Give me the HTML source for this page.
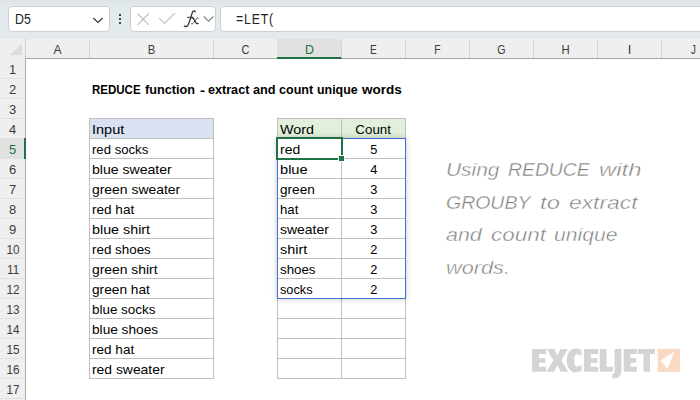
<!DOCTYPE html>
<html>
<head>
<meta charset="utf-8">
<title>REDUCE function - extract and count unique words</title>
<style>
html,body{margin:0;padding:0;}
body{width:700px;height:400px;overflow:hidden;background:#fff;position:relative;font-family:"Liberation Sans",sans-serif;color:#000;}
.a{position:absolute;}
.box{position:absolute;background:#fff;border:1px solid #cdd0d2;border-radius:4px;box-sizing:border-box;}
.ch{position:absolute;top:39px;height:19px;line-height:21.6px;text-align:center;font-size:13px;color:#3b3b3b;}
.cs{position:absolute;top:41px;width:1px;height:17px;background:#d2d2d2;}
.rh{position:absolute;left:0;width:25px;height:19px;line-height:21.6px;text-align:center;font-size:13px;color:#3b3b3b;}
.rs{position:absolute;left:0;width:25px;height:1px;background:#e1e1e1;}
.t{position:absolute;height:19px;line-height:22px;font-size:13.6px;white-space:nowrap;transform-origin:0 50%;transform:scaleX(1.035);}
.n{position:absolute;height:19px;line-height:22px;font-size:13.6px;white-space:nowrap;text-align:center;}
.n span{display:inline-block;transform:scaleX(1.035);}
.hl{position:absolute;height:1px;background:#bfbfbf;}
.vl{position:absolute;width:1px;background:#bfbfbf;}
.w{position:absolute;font-size:18.5px;line-height:30px;height:30px;font-style:italic;color:#7d7d7d;-webkit-text-stroke:0.4px #fff;white-space:nowrap;transform-origin:0 50%;}
</style>
</head>
<body>

<div class="a" style="left:0;top:0;width:700px;height:39px;background:#e3eaed;"></div>
<div class="a" style="left:0;top:0;width:700px;height:5px;background:linear-gradient(#dde3e6,#e3eaed);"></div>
<div class="box" style="left:8px;top:6px;width:102px;height:26px;"></div>
<div class="a" style="left:15px;top:9px;font-size:15px;line-height:20px;color:#222;transform-origin:0 50%;transform:scaleX(0.825);">D5</div>
<svg class="a" style="left:92.2px;top:15.3px;" width="12" height="10" viewBox="0 0 12 10"><path d="M1.3 3 L6 7.4 L10.7 3" fill="none" stroke="#3a3a3a" stroke-width="1.2"/></svg>
<div class="a" style="left:119px;top:14px;width:2px;height:2px;background:#444;"></div>
<div class="a" style="left:119px;top:18px;width:2px;height:2px;background:#444;"></div>
<div class="a" style="left:119px;top:22px;width:2px;height:2px;background:#444;"></div>
<div class="box" style="left:130px;top:6px;width:86px;height:26px;"></div>
<svg class="a" style="left:136px;top:12px;" width="15" height="15" viewBox="0 0 15 15"><path d="M1.5 1.5 L12.8 12.8 M12.8 1.5 L1.5 12.8" fill="none" stroke="#bcbcbc" stroke-width="1.1"/></svg>
<svg class="a" style="left:158px;top:12px;" width="18" height="15" viewBox="0 0 18 15"><path d="M1.2 6.2 L6.4 11.5 L16.9 1.1" fill="none" stroke="#bcbcbc" stroke-width="1.1"/></svg>
<svg class="a" style="left:180px;top:6px;" width="22" height="26" viewBox="180 6 22 26" fill="none" stroke="#2e2e2e" stroke-linecap="round" stroke-linejoin="round"><path stroke-width="1.3" d="M195.3 11.9 C194.9 10.7 193 10.4 192.4 12.4 L188.4 24.6 C187.8 26.4 186 26.9 184.3 26.2"/><path stroke-width="0.95" d="M187.4 17.3 H193.2"/><path stroke-width="1.3" d="M192 18.3 C192.9 17.8 193.5 18.3 194.1 19.5 L195.9 22.8 C196.5 23.9 197.1 24 198 23.4"/><path stroke-width="0.9" d="M198.4 18.1 C197.7 17.6 197.1 18 196.4 18.9 L193.4 22.8 C192.7 23.7 192.2 24.1 191.6 23.8"/></svg>
<svg class="a" style="left:203px;top:15.3px;" width="12" height="8" viewBox="0 0 12 8"><path d="M0.8 1.5 L5.6 6.2 L10.4 1.5" fill="none" stroke="#808080" stroke-width="1.1"/></svg>
<div class="box" style="left:220px;top:6px;width:490px;height:26px;"></div>
<div class="a" style="left:236px;top:9px;font-size:15px;line-height:20px;color:#222;letter-spacing:1px;transform-origin:0 50%;transform:scaleX(0.82);">=LET(</div>
<div class="a" style="left:0;top:39px;width:700px;height:19px;background:#efefef;"></div>
<div class="a" style="left:0;top:58px;width:25px;height:342px;background:#efefef;"></div>
<div class="a" style="left:277px;top:39px;width:65px;height:18px;background:#e1e1e1;"></div>
<div class="a" style="left:0;top:138px;width:24px;height:21px;background:#e1e1e1;"></div>
<div class="a" style="left:25px;top:39px;width:1px;height:19px;background:#cfcfcf;"></div>
<div class="a" style="left:25px;top:58px;width:675px;height:1px;background:#a6a6a6;"></div>
<div class="a" style="left:25px;top:58px;width:1px;height:342px;background:#acacac;"></div>
<div class="a" style="left:277px;top:57px;width:65px;height:2px;background:#217346;"></div>
<div class="a" style="left:24px;top:138px;width:2px;height:21px;background:#217346;"></div>
<svg class="a" style="left:9px;top:43px;" width="14" height="13" viewBox="0 0 14 13"><path d="M13 0 L13 12 L1 12 Z" fill="#dcdcdc"/></svg>
<div class="ch" style="left:26px;width:63px;transform:scaleX(0.93);">A</div>
<div class="ch" style="left:90px;width:123px;transform:scaleX(0.87);">B</div>
<div class="cs" style="left:89px;"></div>
<div class="ch" style="left:214px;width:63px;transform:scaleX(0.84);">C</div>
<div class="cs" style="left:213px;"></div>
<div class="ch" style="left:278px;width:63px;color:#217346;transform:scaleX(0.95);">D</div>
<div class="ch" style="left:342px;width:63px;transform:scaleX(0.78);">E</div>
<div class="ch" style="left:406px;width:63px;transform:scaleX(0.8);">F</div>
<div class="cs" style="left:405px;"></div>
<div class="ch" style="left:470px;width:63px;transform:scaleX(0.82);">G</div>
<div class="cs" style="left:469px;"></div>
<div class="ch" style="left:534px;width:63px;transform:scaleX(0.87);">H</div>
<div class="cs" style="left:533px;"></div>
<div class="ch" style="left:598px;width:63px;">I</div>
<div class="cs" style="left:597px;"></div>
<div class="ch" style="left:662px;width:63px;transform:scaleX(0.75);">J</div>
<div class="cs" style="left:661px;"></div>
<div class="cs" style="left:341px;"></div>
<div class="rh" style="top:59px;">1</div>
<div class="rs" style="top:78px;"></div>
<div class="rh" style="top:79px;">2</div>
<div class="rs" style="top:98px;"></div>
<div class="rh" style="top:99px;">3</div>
<div class="rs" style="top:118px;"></div>
<div class="rh" style="top:119px;">4</div>
<div class="rh" style="top:139px;color:#217346;">5</div>
<div class="rh" style="top:159px;">6</div>
<div class="rs" style="top:178px;"></div>
<div class="rh" style="top:179px;">7</div>
<div class="rs" style="top:198px;"></div>
<div class="rh" style="top:199px;">8</div>
<div class="rs" style="top:218px;"></div>
<div class="rh" style="top:219px;">9</div>
<div class="rs" style="top:238px;"></div>
<div class="rh" style="top:239px;transform:translateX(0.6px) scaleX(0.9);">10</div>
<div class="rs" style="top:258px;"></div>
<div class="rh" style="top:259px;transform:translateX(0.6px) scaleX(0.9);">11</div>
<div class="rs" style="top:278px;"></div>
<div class="rh" style="top:279px;transform:translateX(0.6px) scaleX(0.9);">12</div>
<div class="rs" style="top:298px;"></div>
<div class="rh" style="top:299px;transform:translateX(0.6px) scaleX(0.9);">13</div>
<div class="rs" style="top:318px;"></div>
<div class="rh" style="top:319px;transform:translateX(0.6px) scaleX(0.9);">14</div>
<div class="rs" style="top:338px;"></div>
<div class="rh" style="top:339px;transform:translateX(0.6px) scaleX(0.9);">15</div>
<div class="rs" style="top:358px;"></div>
<div class="rh" style="top:359px;transform:translateX(0.6px) scaleX(0.9);">16</div>
<div class="rs" style="top:378px;"></div>
<div class="rh" style="top:379px;transform:translateX(0.6px) scaleX(0.9);">17</div>
<div class="rs" style="top:398px;"></div>
<div class="a" style="left:90px;top:119px;width:123px;height:19px;background:#d9e1f2;"></div>
<div class="a" style="left:278px;top:119px;width:127px;height:19px;background:#e2efda;"></div>
<div class="hl" style="left:89px;top:118px;width:125px;"></div>
<div class="hl" style="left:89px;top:138px;width:125px;"></div>
<div class="hl" style="left:89px;top:158px;width:125px;"></div>
<div class="hl" style="left:89px;top:178px;width:125px;"></div>
<div class="hl" style="left:89px;top:198px;width:125px;"></div>
<div class="hl" style="left:89px;top:218px;width:125px;"></div>
<div class="hl" style="left:89px;top:238px;width:125px;"></div>
<div class="hl" style="left:89px;top:258px;width:125px;"></div>
<div class="hl" style="left:89px;top:278px;width:125px;"></div>
<div class="hl" style="left:89px;top:298px;width:125px;"></div>
<div class="hl" style="left:89px;top:318px;width:125px;"></div>
<div class="hl" style="left:89px;top:338px;width:125px;"></div>
<div class="hl" style="left:89px;top:358px;width:125px;"></div>
<div class="hl" style="left:89px;top:378px;width:125px;"></div>
<div class="vl" style="left:89px;top:118px;height:261px;"></div>
<div class="vl" style="left:213px;top:118px;height:261px;"></div>
<div class="hl" style="left:277px;top:118px;width:129px;"></div>
<div class="hl" style="left:277px;top:138px;width:129px;"></div>
<div class="hl" style="left:277px;top:158px;width:129px;"></div>
<div class="hl" style="left:277px;top:178px;width:129px;"></div>
<div class="hl" style="left:277px;top:198px;width:129px;"></div>
<div class="hl" style="left:277px;top:218px;width:129px;"></div>
<div class="hl" style="left:277px;top:238px;width:129px;"></div>
<div class="hl" style="left:277px;top:258px;width:129px;"></div>
<div class="hl" style="left:277px;top:278px;width:129px;"></div>
<div class="hl" style="left:277px;top:298px;width:129px;"></div>
<div class="hl" style="left:277px;top:318px;width:129px;"></div>
<div class="hl" style="left:277px;top:338px;width:129px;"></div>
<div class="hl" style="left:277px;top:358px;width:129px;"></div>
<div class="hl" style="left:277px;top:378px;width:129px;"></div>
<div class="vl" style="left:277px;top:118px;height:261px;"></div>
<div class="vl" style="left:341px;top:118px;height:261px;"></div>
<div class="vl" style="left:405px;top:118px;height:261px;"></div>
<div class="a" style="left:277px;top:138px;width:127px;height:159px;border:1px solid #3f6fcf;box-shadow:0 0 6px rgba(0,0,0,0.22);"></div>
<div class="a" style="left:276px;top:137px;width:63px;height:19px;border:2px solid #217346;"></div>
<div class="a" style="left:338px;top:155px;width:5px;height:5px;background:#217346;border:1px solid #fff;"></div>
<div class="t" style="left:92.0px;top:79px;font-weight:bold;transform:scaleX(0.847);">REDUCE</div>
<div class="t" style="left:144.5px;top:79px;font-weight:bold;transform:scaleX(0.935);">function</div>
<div class="t" style="left:199.5px;top:79px;font-weight:bold;transform:scaleX(1.126) translateY(1px);">-</div>
<div class="t" style="left:207.5px;top:79px;font-weight:bold;transform:scaleX(0.927);">extract</div>
<div class="t" style="left:252.5px;top:79px;font-weight:bold;transform:scaleX(0.935);">and</div>
<div class="t" style="left:279.0px;top:79px;font-weight:bold;transform:scaleX(0.922);">count</div>
<div class="t" style="left:317.0px;top:79px;font-weight:bold;transform:scaleX(0.911);">unique</div>
<div class="t" style="left:361.5px;top:79px;font-weight:bold;transform:scaleX(0.995);">words</div>
<div class="t" style="left:92px;top:119px;transform:scaleX(1.0684);">Input</div>
<div class="t" style="left:92px;top:139px;transform:scaleX(0.9660);">red socks</div>
<div class="t" style="left:92px;top:159px;transform:scaleX(1.0350);">blue sweater</div>
<div class="t" style="left:92px;top:179px;transform:scaleX(1.0234);">green sweater</div>
<div class="t" style="left:92px;top:199px;transform:scaleX(0.9974);">red hat</div>
<div class="t" style="left:92px;top:219px;transform:scaleX(1.0532);">blue shirt</div>
<div class="t" style="left:92px;top:239px;transform:scaleX(0.9849);">red shoes</div>
<div class="t" style="left:92px;top:259px;transform:scaleX(1.0196);">green shirt</div>
<div class="t" style="left:92px;top:279px;transform:scaleX(1.0076);">green hat</div>
<div class="t" style="left:92px;top:299px;transform:scaleX(0.9880);">blue socks</div>
<div class="t" style="left:92px;top:319px;transform:scaleX(1.0046);">blue shoes</div>
<div class="t" style="left:92px;top:339px;transform:scaleX(0.9974);">red hat</div>
<div class="t" style="left:92px;top:359px;transform:scaleX(1.0210);">red sweater</div>
<div class="t" style="left:280px;top:119px;transform:scaleX(1.0539);">Word</div>
<div class="t" style="left:280px;top:139px;transform:scaleX(1.0254);">red</div>
<div class="t" style="left:280px;top:159px;transform:scaleX(1.0748);">blue</div>
<div class="t" style="left:280px;top:179px;transform:scaleX(1.0008);">green</div>
<div class="t" style="left:280px;top:199px;transform:scaleX(0.9738);">hat</div>
<div class="t" style="left:280px;top:219px;transform:scaleX(1.0268);">sweater</div>
<div class="t" style="left:280px;top:239px;transform:scaleX(1.0582);">shirt</div>
<div class="t" style="left:280px;top:259px;transform:scaleX(0.9791);">shoes</div>
<div class="t" style="left:280px;top:279px;transform:scaleX(0.9374);">socks</div>
<div class="n" style="left:342px;width:63px;top:119px;"><span style="transform:scaleX(0.9798);">Count</span></div>
<div class="n" style="left:342px;width:63px;top:139px;"><span style="transform:scaleX(0.9400);">5</span></div>
<div class="n" style="left:342px;width:63px;top:159px;"><span style="transform:scaleX(0.9400);">4</span></div>
<div class="n" style="left:342px;width:63px;top:179px;"><span style="transform:scaleX(0.9400);">3</span></div>
<div class="n" style="left:342px;width:63px;top:199px;"><span style="transform:scaleX(0.9400);">3</span></div>
<div class="n" style="left:342px;width:63px;top:219px;"><span style="transform:scaleX(0.9400);">3</span></div>
<div class="n" style="left:342px;width:63px;top:239px;"><span style="transform:scaleX(0.9400);">2</span></div>
<div class="n" style="left:342px;width:63px;top:259px;"><span style="transform:scaleX(0.9400);">2</span></div>
<div class="n" style="left:342px;width:63px;top:279px;"><span style="transform:scaleX(0.9400);">2</span></div>
<div class="w" style="left:446.1px;top:154.9px;transform:scaleX(1.131);">Using</div>
<div class="w" style="left:507.9px;top:154.9px;transform:scaleX(1.046);">REDUCE</div>
<div class="w" style="left:598.5px;top:154.9px;transform:scaleX(1.295);">with</div>
<div class="w" style="left:446.1px;top:187.9px;transform:scaleX(1.053);">GROUBY</div>
<div class="w" style="left:540.0px;top:187.9px;transform:scaleX(1.289);">to</div>
<div class="w" style="left:568.5px;top:187.9px;transform:scaleX(1.234);">extract</div>
<div class="w" style="left:446.1px;top:220.4px;transform:scaleX(1.160);">and</div>
<div class="w" style="left:491.1px;top:220.4px;transform:scaleX(1.215);">count</div>
<div class="w" style="left:554.4px;top:220.4px;transform:scaleX(1.141);">unique</div>
<div class="w" style="left:446.1px;top:252.9px;transform:scaleX(1.174);">words.</div>
<svg class="a" style="left:0;top:0;" width="700" height="400" viewBox="0 0 700 400"><path fill="#d3d5d5" d="M532.1 349.0 H546.1 V354.0 H539.0 V358.3 H545.3 V362.8 H539.0 V366.8 H546.1 V371.8 H532.1 Z M546.7 349 H554.2 L557.4 355.6 L560.6 349 H567.9 L561.4 360.2 L568.2 371.8 H560.7 L557.3 365 L554.1 371.8 H546.5 L553.3 360.2 Z M581.6 350.2 C579.9 349.1 577.9 348.5 575.9 348.5 C570.3 348.5 566.7 353 566.7 360.4 C566.7 367.8 570.3 372.3 575.9 372.3 C577.9 372.3 579.9 371.7 581.6 370.6 V364.6 C580.3 365.8 578.7 366.5 577.2 366.5 C575 366.5 574.1 364.3 574.1 360.4 C574.1 356.5 575 354.3 577.2 354.3 C578.7 354.3 580.3 355 581.6 356.2 Z M583.9 349.0 H598.1 V354.0 H590.8 V358.3 H597.3 V362.8 H590.8 V366.8 H598.1 V371.8 H583.9 Z M599.7 349 H606.6 V366.8 H612.9 V371.8 H599.7 Z M614.6 349 H621.4 V370.6 C621.4 376 618.6 378.4 614.6 378.4 C613.7 378.4 612.8 378.3 612.1 378.1 L612.6 373.4 C613.9 373.7 614.6 373.1 614.6 371 Z M623.7 349.0 H636.9 V354.0 H630.6 V358.3 H636.1 V362.8 H630.6 V366.8 H636.9 V371.8 H623.7 Z M638 349 H654.9 V354 H650 V371.8 H643.5 V354 H638 Z"/><rect x="657.7" y="348.8" width="22.2" height="23" fill="#fad9c3"/><path d="M674.3 351.5 L660.7 360.5 L667.5 369.2 Z" fill="#fff"/></svg>
</body>
</html>
